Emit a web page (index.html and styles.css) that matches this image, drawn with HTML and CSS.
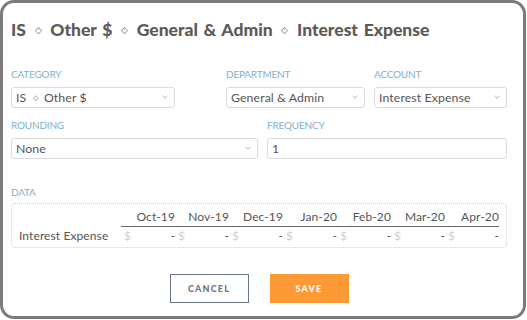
FILE: index.html
```html
<!DOCTYPE html>
<html lang="en">
<head>
    <meta charset="UTF-8">
    <meta name="viewport" content="width=device-width, initial-scale=1.0">
    <title>Edit Line Item</title>
    <link rel="stylesheet" href="styles.css">
</head>
<body>
    <div class="frame">
        <h1 class="title">IS <span class="sep">&#9671;</span> Other $ <span class="sep">&#9671;</span> General &amp; Admin <span class="sep">&#9671;</span> Interest Expense</h1>

        <!-- Row 1 -->
        <div class="row row-one">
            <div class="field f-category">
                <label>Category</label>
                <div class="select">IS <span class="sep-sm">&#9671;</span> Other $</div>
            </div>
            <div class="field f-department">
                <label>Department</label>
                <div class="select">General &amp; Admin</div>
            </div>
            <div class="field f-account">
                <label>Account</label>
                <div class="select">Interest Expense</div>
            </div>
        </div>

        <!-- Row 2 -->
        <div class="row row-two">
            <div class="field f-rounding">
                <label>Rounding</label>
                <div class="select">None</div>
            </div>
            <div class="field f-frequency">
                <label>Frequency</label>
                <div class="input">1</div>
            </div>
        </div>

        <!-- Data -->
        <div class="field data-field">
            <label>Data</label>
            <div class="data-box">
                <table class="data">
                    <thead>
                        <tr>
                            <th class="name"></th>
                            <th>Oct-19</th>
                            <th>Nov-19</th>
                            <th>Dec-19</th>
                            <th>Jan-20</th>
                            <th>Feb-20</th>
                            <th>Mar-20</th>
                            <th>Apr-20</th>
                        </tr>
                    </thead>
                    <tbody id="dataBody"></tbody>
                </table>
            </div>
        </div>

        <div class="actions">
            <button class="cancel">Cancel</button>
            <button class="save">Save</button>
        </div>
    </div>

    <script>
        const values = [null, null, null, null, null, null, null];
        const row = document.createElement('tr');
        let html = '<td class="name">Interest Expense</td>';
        values.forEach(v => {
            html += `<td><span class="cur">$</span><span class="val">${v === null ? '-' : v}</span></td>`;
        });
        row.innerHTML = html;
        document.getElementById('dataBody').appendChild(row);
    </script>
</body>
</html>
```

FILE: styles.css
```css
body {
    margin: 0;
    font-family: Lato, "Open Sans", sans-serif;
    background-color: white;
}
.frame {
    width: 526px;
    height: 319px;
    box-sizing: border-box;
    border: 3px solid #7b7b7b;
    border-radius: 14px;
    padding: 0 16px 0 8px;
}
.title {
    margin: 16px 0 0 0;
    font-size: 17.5px;
    font-weight: 900;
    color: #5e5a5a;
    line-height: 22px;
    word-spacing: 1.5px;
}
.title .sep {
    font-size: 9px;
    font-weight: normal;
    vertical-align: 3px;
    margin: 0 3px;
}
.row {
    display: flex;
}
.row-one {
    margin-top: 27px;
}
.f-category { width: 164px; }
.f-department { width: 139px; margin-left: 51px; }
.f-account { width: 133px; margin-left: 9px; }
.row-two {
    margin-top: 11px;
    gap: 9px;
}
.f-rounding { width: 247px; }
.f-frequency { width: 240px; }
label {
    display: block;
    font-size: 10px;
    text-transform: uppercase;
    color: #7fb1cb;
    letter-spacing: -0.2px;
    line-height: 12px;
    margin-bottom: 7px;
}
.select, .input {
    position: relative;
    height: 21px;
    box-sizing: border-box;
    border: 1px solid #dcdcdc;
    border-radius: 3px;
    padding: 0 4px;
    font-size: 12.3px;
    line-height: 19px;
    color: #555;
    letter-spacing: 0.1px;
    white-space: nowrap;
}
.select::after {
    content: "";
    position: absolute;
    right: 7px;
    top: 6px;
    width: 3px;
    height: 3px;
    border-right: 1px solid #c8c8c8;
    border-bottom: 1px solid #c8c8c8;
    transform: rotate(45deg);
}
.sep-sm {
    font-size: 7px;
    vertical-align: 2px;
    margin: 0 3px;
}
.data-field {
    margin-top: 27px;
    width: 496px;
}
.data-field label {
    margin-bottom: 5px;
}
.data-box {
    border: 1px dotted #cfcfcf;
    border-radius: 4px;
    height: 45px;
    box-sizing: border-box;
    padding: 5px 7px 0 7px;
}
.data {
    width: 100%;
    border-collapse: collapse;
    font-size: 12px;
    color: #555;
    letter-spacing: 0.1px;
}
.data th {
    font-weight: normal;
    text-align: right;
    padding: 0 0 1px 0;
    border-bottom: 1px solid #666;
    line-height: 16px;
    width: 54px;
}
.data th.name {
    border-bottom: none;
    width: auto;
}
.data td {
    padding: 1px 0 0 0;
    line-height: 15px;
}
.data .cur {
    float: left;
    color: #cfcfcf;
    padding-left: 3px;
}
.data .val {
    float: right;
}
.actions {
    display: flex;
    justify-content: center;
    gap: 21px;
    margin-top: 26px;
    padding-left: 0;
}
button {
    width: 79px;
    height: 29px;
    font-family: Lato, sans-serif;
    font-size: 9px;
    font-weight: 900;
    letter-spacing: 1.2px;
    text-transform: uppercase;
    border-radius: 0;
    cursor: pointer;
}
button.cancel {
    background-color: white;
    color: #6b7581;
    border: 1px solid #6b7785;
}
button.save {
    background-color: #fd9a36;
    color: white;
    border: none;
}
```
